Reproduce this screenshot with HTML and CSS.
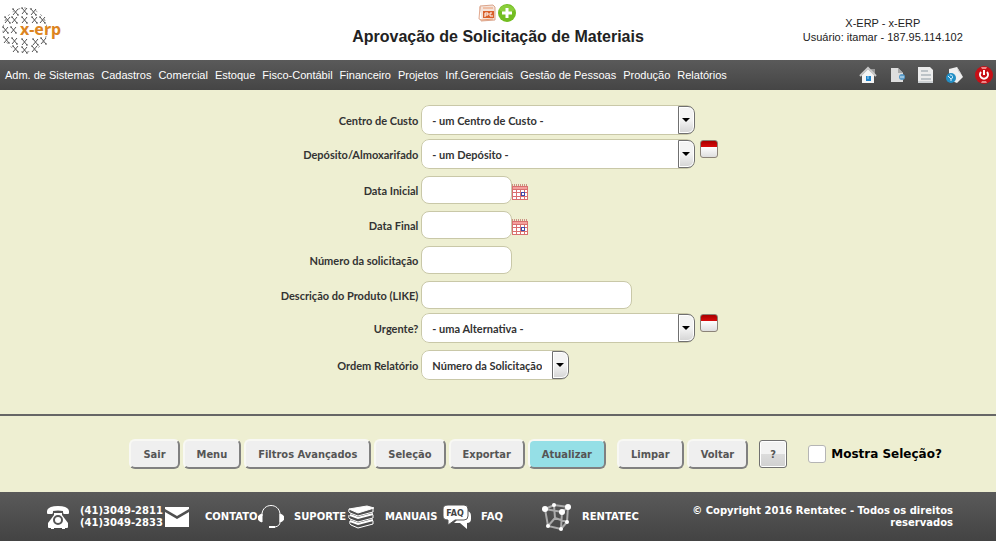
FILE: index.html
```html
<!DOCTYPE html>
<html lang="pt-BR">
<head>
    <meta charset="UTF-8">
    <meta name="viewport" content="width=device-width, initial-scale=1.0">
    <title>X-ERP - Aprovação de Solicitação de Materiais</title>
    <link rel="stylesheet" href="styles.css">
</head>
<body>
    <header class="header">
        <a href="#" class="logo" aria-label="x-erp">
            <svg width="62" height="50" viewBox="0 0 62 50">
                <defs>
                    <path id="cross" d="M-2-3l5 6M3-3l-5 6M-3-3h2M2 3h2"/>
                </defs>
                <g fill="none" stroke="#555">
                    <use href="#cross" x="13" y="7"/><use href="#cross" x="22" y="6"/><use href="#cross" x="31" y="7"/>
                    <use href="#cross" x="5" y="15"/><use href="#cross" x="12" y="15"/><use href="#cross" x="22" y="15"/><use href="#cross" x="32" y="15"/><use href="#cross" x="40" y="15"/>
                    <use href="#cross" x="3" y="25"/><use href="#cross" x="11" y="25"/>
                    <use href="#cross" x="4" y="35"/><use href="#cross" x="12" y="36"/><use href="#cross" x="22" y="37"/><use href="#cross" x="33" y="37"/><use href="#cross" x="41" y="36"/>
                    <use href="#cross" x="13" y="44"/><use href="#cross" x="22" y="45"/><use href="#cross" x="32" y="44"/>
                </g>
                <circle cx="23" cy="25" r="22" fill="none" stroke="#888" stroke-dasharray="2 4"/>
                <text class="logo-name" x="18" y="30">x-erp</text>
            </svg>
        </a>
        <div class="title-box">
            <div class="title-icons">
                <a href="#" aria-label="Exportar apresentação">
                    <svg width="18" height="20" viewBox="0 0 18 20">
                        <path d="M2 3l13-1 2 2v13l-14 1z" fill="#f4e3da" stroke="#dba58c"/>
                        <path d="M2 4l-1 12 3 1" fill="#fff" stroke="#e2a88e"/>
                        <path d="M5 5h10M4 17l11-1" stroke="#eb9b70"/>
                        <rect x="5" y="8" width="11" height="7" fill="#d9602b"/>
                        <path d="M7 14v-4h3v2H7M14 10h-2v3h3" fill="none" stroke="#fff"/>
                    </svg>
                </a>
                <a href="#" aria-label="Adicionar">
                    <svg width="20" height="20" viewBox="0 0 20 20">
                        <circle cx="10" cy="10" r="9" fill="#72bd20"/>
                        <path d="M2 7a9 9 0 0 1 16 0q-8 5-16 0" fill="#8ace3b"/>
                        <path d="M10 5v10M5 10h10" stroke="#fff" stroke-width="3"/>
                    </svg>
                </a>
            </div>
            <h1 class="title">Aprovação de Solicitação de Materiais</h1>
        </div>
        <div class="user-info">
            <p>X-ERP - x-ERP</p>
            <p>Usuário: itamar - 187.95.114.102</p>
        </div>
    </header>

    <nav class="navbar">
        <div class="menu">
            <a href="#">Adm. de Sistemas</a>
            <a href="#">Cadastros</a>
            <a href="#">Comercial</a>
            <a href="#">Estoque</a>
            <a href="#">Fisco-Contábil</a>
            <a href="#">Financeiro</a>
            <a href="#">Projetos</a>
            <a href="#">Inf.Gerenciais</a>
            <a href="#">Gestão de Pessoas</a>
            <a href="#">Produção</a>
            <a href="#">Relatórios</a>
        </div>
        <div class="shortcuts">
            <a href="#" aria-label="Início">
                <svg width="18" height="18" viewBox="0 0 18 18">
                    <path d="M12 3h4v6h-4z" fill="#999"/>
                    <path d="M3 9l6-6 6 6v8H3z" fill="#f4f4f4"/>
                    <path d="M1 10l8-8 8 8" fill="none" stroke="#c9c9c9" stroke-width="2"/>
                    <rect x="7" y="10" width="5" height="5" fill="#1e82c8"/>
                    <path d="M9 10v3" stroke="#a7d8f5"/>
                </svg>
            </a>
            <a href="#" aria-label="Nova página">
                <svg width="18" height="18" viewBox="0 0 18 18">
                    <path d="M3 2h7l5 5v9H3z" fill="#dedede"/>
                    <path d="M10 2v5h5z" fill="#aaa"/>
                    <circle cx="14" cy="11" r="3" fill="#5b9bc8"/>
                    <path d="M12 11h4" stroke="#d9edf8"/>
                </svg>
            </a>
            <a href="#" aria-label="Relatório">
                <svg width="18" height="18" viewBox="0 0 18 18">
                    <path d="M1 1h12l3 3v13H1z" fill="#ececec"/>
                    <path d="M1 16h15" stroke="#aeb6bb"/>
                    <path d="M4 5h7M4 9h10M4 13h10" stroke="#8d9aa3"/>
                </svg>
            </a>
            <a href="#" aria-label="Pesquisar">
                <svg width="18" height="18" viewBox="0 0 18 18">
                    <path d="M3 3l8-2 6 10-6 6-8-3z" fill="#efefef"/>
                    <path d="M11 1l1 4 3 3 2 3" fill="#ccc"/>
                    <circle cx="5" cy="12" r="5" fill="#238fc5"/>
                    <path d="M2 10l3 3M4 9a2 2 0 1 1 1 4v2" fill="none" stroke="#d5f0ff"/>
                </svg>
            </a>
            <a href="#" aria-label="Desligar">
                <svg width="18" height="18" viewBox="0 0 18 18">
                    <circle cx="9" cy="9" r="9" fill="#c70f16"/>
                    <path d="M6 1h6l-1 2H7zM6 17h6l-1-2H7z" fill="#ee8585"/>
                    <path d="M6 6a4 4 0 1 0 6 0M9 4v5" fill="none" stroke="#fff" stroke-width="2"/>
                </svg>
            </a>
        </div>
    </nav>

    <main>
        <form>
            <div class="filters">
                <div class="row">
                    <label for="centro">Centro de Custo</label>
                    <div class="field">
                        <span class="select"><select id="centro" class="wide"><option>- um Centro de Custo -</option></select></span>
                    </div>
                </div>
                <div class="row row-tight">
                    <label for="deposito">Depósito/Almoxarifado</label>
                    <div class="field">
                        <span class="select"><select id="deposito" class="wide"><option>- um Depósito -</option></select></span>
                        <button type="button" class="clear-btn" aria-label="Limpar depósito"></button>
                    </div>
                </div>
                <div class="row">
                    <label for="data-inicial">Data Inicial</label>
                    <div class="field">
                        <input type="text" id="data-inicial" class="short">
                        <button type="button" class="date-btn" aria-label="Escolher data inicial">
                            <svg width="16" height="16" viewBox="0 0 16 16">
                                <rect y="2" width="16" height="14" fill="#d9706e"/>
                                <path d="M0 1h16" stroke="#a33" stroke-dasharray="1 1"/>
                                <path d="M1 3h14v2H1z" fill="#f3a09c"/>
                                <path d="M1 6h3v2H1zM5 6h3v2H5zM9 6h3v2H9zM13 6h2v2h-2zM1 9h3v3H1zM5 9h3v3H5zM9 9h3v3H9zM13 9h2v3h-2zM1 13h3v2H1zM5 13h3v2H5zM9 13h3v2H9zM13 13h2v2h-2z" fill="#fff"/>
                                <rect x="9.500" y="8.500" width="3" height="3" fill="#fff" stroke="#3e4bad"/>
                            </svg>
                        </button>
                    </div>
                </div>
                <div class="row">
                    <label for="data-final">Data Final</label>
                    <div class="field">
                        <input type="text" id="data-final" class="short">
                        <button type="button" class="date-btn" aria-label="Escolher data final">
                            <svg width="16" height="16" viewBox="0 0 16 16">
                                <rect y="2" width="16" height="14" fill="#d9706e"/>
                                <path d="M0 1h16" stroke="#a33" stroke-dasharray="1 1"/>
                                <path d="M1 3h14v2H1z" fill="#f3a09c"/>
                                <path d="M1 6h3v2H1zM5 6h3v2H5zM9 6h3v2H9zM13 6h2v2h-2zM1 9h3v3H1zM5 9h3v3H5zM9 9h3v3H9zM13 9h2v3h-2zM1 13h3v2H1zM5 13h3v2H5zM9 13h3v2H9zM13 13h2v2h-2z" fill="#fff"/>
                                <rect x="9.500" y="8.500" width="3" height="3" fill="#fff" stroke="#3e4bad"/>
                            </svg>
                        </button>
                    </div>
                </div>
                <div class="row">
                    <label for="numero">Número da solicitação</label>
                    <div class="field"><input type="text" id="numero" class="short"></div>
                </div>
                <div class="row">
                    <label for="descricao">Descrição do Produto (LIKE)</label>
                    <div class="field"><input type="text" id="descricao" class="medium"></div>
                </div>
                <div class="row row-tight">
                    <label for="urgente">Urgente?</label>
                    <div class="field">
                        <span class="select"><select id="urgente" class="wide"><option>- uma Alternativa -</option></select></span>
                        <button type="button" class="clear-btn" aria-label="Limpar urgente"></button>
                    </div>
                </div>
                <div class="row">
                    <label for="ordem">Ordem Relatório</label>
                    <div class="field">
                        <span class="select"><select id="ordem"><option>Número da Solicitação</option></select></span>
                    </div>
                </div>
            </div>

            <div class="actions">
                <div class="btn-group">
                    <button type="button" class="btn">Sair</button>
                    <button type="button" class="btn">Menu</button>
                    <button type="button" class="btn">Filtros Avançados</button>
                    <button type="button" class="btn">Seleção</button>
                    <button type="button" class="btn">Exportar</button>
                    <button type="submit" class="btn btn-primary">Atualizar</button>
                </div>
                <div class="btn-group">
                    <button type="reset" class="btn">Limpar</button>
                    <button type="button" class="btn">Voltar</button>
                </div>
                <button type="button" class="btn-help">?</button>
                <label class="check"><input type="checkbox"> Mostra Seleção?</label>
            </div>
        </form>
    </main>

    <footer class="footer">
        <div class="links">
            <div class="link">
                <svg width="24" height="24" viewBox="0 0 24 24" fill="#fff">
                    <path d="M1 8V6q1-5 11-5t11 5v2q0 1-1 1h-4q-1 0-1-2V6q-5-1-10 0v1q0 2-1 2H2Q1 9 1 8z"/>
                    <path d="M8 8h8v2l6 8v4q0 1-1 1h-2v1h-3v-1H8v1H5v-1H3q-1 0-1-1v-4l6-8z"/>
                    <circle cx="12" cy="15" r="4" fill="none" stroke="#555" stroke-width="2"/>
                </svg>
                <span>(41)3049-2811<br>(41)3049-2833</span>
            </div>
            <a href="#" class="link">
                <svg width="26" height="24" viewBox="0 0 26 24" fill="#fff">
                    <path d="M1 2h24v2l-12 7L1 4z"/>
                    <path d="M1 7l12 7 12-7v15H1z"/>
                </svg>
                <span class="spaced">CONTATO</span>
            </a>
            <a href="#" class="link">
                <svg width="26" height="24" viewBox="0 0 26 24" fill="none" stroke="#fff">
                    <path d="M4 11C3-3 23-3 22 11v6q0 4-5 5"/>
                    <path d="M4 9v8q-4-1-4-4t4-4zM22 9v8q4-1 4-4t-4-4z" fill="#fff"/>
                    <path d="M11 22h6" stroke-width="2"/>
                </svg>
                <span>SUPORTE</span>
            </a>
            <a href="#" class="link">
                <svg width="28" height="24" viewBox="0 0 28 24" fill="#fff" stroke="#fff">
                    <path d="M2 4l18-3 7 2-16 5z"/>
                    <path d="M2 4q-1 3 1 4l8 3 15-4V4M2 10q-1 3 1 4l8 3 15-4v-3M3 16q-1 3 1 4l7 3 15-4v-3" fill="none"/>
                    <path d="M3 10l8 3 15-4M3 16l8 3 15-4" fill="none" stroke-width="2"/>
                </svg>
                <span>MANUAIS</span>
            </a>
            <a href="#" class="link">
                <svg width="28" height="26" viewBox="0 0 28 26">
                    <path d="M23 7q5 0 5 5v3q0 4-4 4v6l-7-6h-6" fill="#fff"/>
                    <path d="M5 1h16q4 0 4 4v7q0 4-4 4H12l-7 5v-5q-5 0-5-4V5q0-4 5-4z" fill="#fff" stroke="#555"/>
                    <text class="faq-text" x="12" y="12" text-anchor="middle">FAQ</text>
                </svg>
                <span>FAQ</span>
            </a>
            <a href="#" class="link">
                <svg width="30" height="28" viewBox="0 0 30 28" fill="none" stroke="#aaa" stroke-width="2">
                    <path d="M3 6l17 3 6-5-14-2zM3 6l3 17 13 3 1-17M26 4l-1 15-6 7M12 2l1 13 12 4M13 15l-7 8"/>
                    <g fill="#fff" stroke="none">
                        <circle cx="3" cy="6" r="3"/><circle cx="12" cy="2" r="2"/><circle cx="26" cy="4" r="3"/>
                        <circle cx="20" cy="9" r="3"/><circle cx="6" cy="23" r="2"/><circle cx="19" cy="26" r="2"/><circle cx="25" cy="19" r="2"/>
                    </g>
                </svg>
                <span>RENTATEC</span>
            </a>
        </div>
        <p class="copyright">© Copyright 2016 Rentatec - Todos os direitos reservados</p>
    </footer>
</body>
</html>
```
FILE: styles.css
```css
*, *::before, *::after {
    margin: 0;
    padding: 0;
    box-sizing: border-box;
}

body {
    min-height: 100vh;
    display: flex;
    flex-direction: column;
    background: #eeefd2;
    color: #333;
    font-family: "Liberation Sans", Arial, sans-serif;
    font-size: 11px;
}

a {
    color: inherit;
    text-decoration: none;
}

svg {
    display: block;
    flex-shrink: 0;
}

button {
    cursor: pointer;
}

/* Cabeçalho */
.header {
    display: grid;
    grid-template-columns: 5fr 12fr 5fr;
    align-items: center;
    height: 60px;
    background: #fff;
}

.logo {
    padding-left: 2px;
}

.logo-name {
    font: bold 16px "Noto Sans", sans-serif;
    fill: #dc8420;
}

.title-box {
    align-self: start;
    padding-top: 3px;
}

.title-icons {
    display: flex;
    justify-content: center;
    gap: 1px;
}

.title {
    margin-top: 4px;
    font-size: 16px;
    line-height: 20px;
    text-align: center;
    color: #222;
}

.user-info {
    line-height: 14px;
    text-align: center;
    color: #222;
}

/* Menu */
.navbar {
    display: flex;
    align-items: center;
    justify-content: space-between;
    height: 30px;
    padding: 0 3px 0 5px;
    background: linear-gradient(#5a5a5a, #454545);
    color: #fff;
}

.menu {
    display: flex;
    gap: 7px;
    white-space: nowrap;
}

.shortcuts {
    display: flex;
    gap: 11px;
}

/* Filtros */
main {
    flex: 1;
}

.filters {
    display: flex;
    flex-direction: column;
    padding: 8px 0 34px;
    border-bottom: 2px solid #666;
}

.row {
    display: grid;
    grid-template-columns: 42% 1fr;
    column-gap: 3px;
    align-items: center;
    margin-top: 7px;
    font: bold 11px Lato, Calibri, sans-serif;
}

.row-tight {
    margin-top: 4px;
}

.row label {
    text-align: right;
}

.field {
    display: flex;
    align-items: flex-start;
}

.field input,
.select select {
    border: 1px solid #c9c8a8;
    border-radius: 8px;
    background: #fff;
    color: #333;
    font: inherit;
}

.field input {
    height: 28px;
    padding: 0 10px;
}

.short {
    width: 91px;
}

.medium {
    width: 211px;
}

.select {
    position: relative;
    border-radius: 8px;
    overflow: hidden;
}

.select select {
    display: block;
    height: 30px;
    padding: 0 26px 0 10px;
    appearance: none;
}

.select .wide {
    width: 274px;
}

.select::before {
    content: "";
    position: absolute;
    top: 1px;
    right: 0;
    width: 17px;
    height: 28px;
    border: 1px solid #707070;
    border-radius: 0 7px 7px 0;
    background: linear-gradient(#f4f4f4 50%, #d4d4d4);
    box-shadow: inset 0 0 0 1px #fff;
    pointer-events: none;
}

.select::after {
    content: "";
    position: absolute;
    top: 13px;
    right: 5px;
    border: 4px solid transparent;
    border-top-color: #000;
    border-bottom: 0;
    pointer-events: none;
}

.clear-btn {
    width: 18px;
    height: 18px;
    margin: 1px 0 0 5px;
    border: 1px solid #8b8378;
    border-radius: 3px;
    background: linear-gradient(#a80000, #d80b0b 6px, #fff 6px, #dedede);
}

.date-btn {
    align-self: flex-end;
    margin-bottom: 4px;
    border: 0;
    background: none;
}

/* Botões */
.actions {
    display: flex;
    align-items: center;
    gap: 11px;
    padding: 23px 0 23px 13%;
    white-space: nowrap;
}

.btn-group {
    display: flex;
    gap: 3px;
}

.btn {
    height: 30px;
    padding: 0 12px;
    border: 2px solid;
    border-color: #f8f8f4 #808080 #808080 #f8f8f4;
    border-radius: 6px;
    background: #efefef;
    color: #555;
    font: bold 11px "DejaVu Sans Condensed", Tahoma, sans-serif;
}

.btn-primary {
    background: #95dfe6;
}

.btn-help {
    width: 28px;
    height: 28px;
    border: 1px solid #707070;
    border-radius: 3px;
    background: linear-gradient(#f2f2f2 50%, #dcdcdc 50%, #d0d0d0);
    box-shadow: inset 0 0 0 1px #fff;
    color: #555;
    font: bold 11px "DejaVu Sans Condensed", Tahoma, sans-serif;
}

.check {
    display: flex;
    align-items: center;
    gap: 5px;
    margin-left: 10px;
    color: #000;
    font: bold 12px "DejaVu Sans", Verdana, sans-serif;
}

.check input {
    width: 18px;
    height: 18px;
    border: 1px solid #b5b5b5;
    border-radius: 3px;
    background: #fff;
    appearance: none;
}

.check input:checked {
    background: #95dfe6;
}

/* Rodapé */
.footer {
    display: flex;
    align-items: center;
    justify-content: space-between;
    min-height: 49px;
    padding: 0 43px 0 46px;
    background: linear-gradient(#5a5a5a, #434343);
    color: #fff;
    font: bold 10px/12px "DejaVu Sans", Verdana, sans-serif;
}

.links {
    display: grid;
    grid-template-columns: 118fr 94fr 89fr 96fr 99fr 99fr;
    flex: 0 1 595px;
}

.link {
    display: flex;
    align-items: center;
    gap: 10px;
    white-space: nowrap;
}

.spaced {
    padding-left: 5px;
}

.faq-text {
    font: bold 8px "DejaVu Sans", sans-serif;
    fill: #444;
}

.copyright {
    flex: 0 1 270px;
    text-align: right;
}
```
